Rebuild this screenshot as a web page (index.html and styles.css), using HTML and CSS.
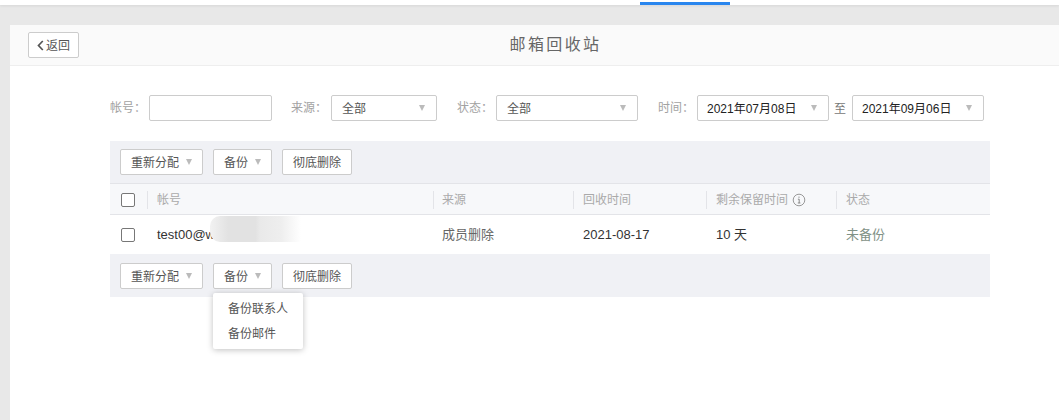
FILE: index.html
```html
<!DOCTYPE html>
<html lang="zh">
<head>
<meta charset="utf-8">
<title>邮箱回收站</title>
<link rel="stylesheet" href="styles.css">
</head>
<body>
<div class="topbar"><div class="topbar-active"></div></div>
<main class="card">
  <header class="head">
    <button class="btn back">
      <svg class="back-icon" width="7" height="11" viewBox="0 0 7 11"><path d="M5.8 1 1.5 5.5l4.3 4.5" fill="none" stroke="#555" stroke-width="1.7"/></svg>返回
    </button>
    <h1 class="title">邮箱回收站</h1>
  </header>
  <section class="filters">
    <span class="label">帐号：</span>
    <input class="field f-account" type="text">
    <span class="label l-source">来源：</span>
    <div class="field select f-source"><span>全部</span><i class="caret"></i></div>
    <span class="label l-state">状态：</span>
    <div class="field select f-state"><span>全部</span><i class="caret"></i></div>
    <span class="label l-time">时间：</span>
    <div class="field select f-date"><span class="date">2021年07月08日</span><i class="caret"></i></div>
    <span class="to">至</span>
    <div class="field select f-date"><span class="date">2021年09月06日</span><i class="caret"></i></div>
  </section>
  <section class="list">
    <div class="toolbar">
      <button class="btn b-assign">重新分配<i class="caret"></i></button>
      <button class="btn b-backup">备份<i class="caret"></i></button>
      <button class="btn b-del">彻底删除</button>
    </div>
    <div class="row thead">
      <div class="cell c-check"><span class="check"></span></div>
      <div class="cell c-account">帐号</div>
      <div class="cell c-src">来源</div>
      <div class="cell c-time">回收时间</div>
      <div class="cell c-left">剩余保留时间
        <svg class="info" width="14" height="14" viewBox="0 0 14 14"><circle cx="7" cy="7" r="5.8" fill="none" stroke="#999" stroke-width="1"/><path d="M7 3.6v1.2M5.9 6.2H7.2V10M5.8 10h2.6" fill="none" stroke="#888" stroke-width="1"/></svg>
      </div>
      <div class="cell c-state">状态</div>
    </div>
    <div class="row tbody">
      <div class="cell c-check"><span class="check"></span></div>
      <div class="cell c-account dark">test00@w<span class="smudge"></span></div>
      <div class="cell c-src mid">成员删除</div>
      <div class="cell c-time dark">2021-08-17</div>
      <div class="cell c-left dark">10 天</div>
      <div class="cell c-state green">未备份</div>
    </div>
    <div class="toolbar bottom">
      <button class="btn b-assign">重新分配<i class="caret"></i></button>
      <div class="drop-wrap">
        <button class="btn b-backup">备份<i class="caret"></i></button>
        <ul class="menu">
          <li>备份联系人</li>
          <li>备份邮件</li>
        </ul>
      </div>
      <button class="btn b-del">彻底删除</button>
    </div>
  </section>
</main>
</body>
</html>
```
FILE: styles.css
```css
* { box-sizing: border-box; }
html, body { margin: 0; height: 420px; overflow: hidden; }
body {
  background: #e8e8e8;
  font-family: "Liberation Sans", "Noto Sans CJK SC", sans-serif;
  font-size: 12px;
  color: #555;
}
.topbar {
  height: 5px;
  background: #fff;
  padding: 2px 0 0 640px;
  box-shadow: 0 1px 3px rgba(0,0,0,.08);
}
.topbar-active { width: 90px; height: 3px; background: #2a86ee; }
.card {
  margin: 20px 0 0 10px;
  height: 395px;
  background: #fff;
  border-top-left-radius: 3px;
}
.head {
  height: 41px;
  background: #fafafa;
  border-bottom: 1px solid #eee;
  position: relative;
  padding: 7px 0 0 18px;
}
.title {
  margin: 0;
  position: absolute;
  left: 0; right: 0; top: 10px;
  padding-left: 42px;
  text-align: center;
  font-size: 16px;
  letter-spacing: 2.4px;
  line-height: 20px;
  font-weight: 400;
  color: #666;
}
.btn {
  display: inline-flex;
  align-items: center;
  height: 26px;
  padding: 0 10px 2px;
  background: #fff;
  border: 1px solid #ccc;
  border-radius: 2px;
  font: inherit;
  color: #555;
  white-space: nowrap;
}
.back { width: 51px; padding: 0 0 2px 8px; position: relative; z-index: 1; }
.back-icon { margin-right: 2px; margin-top: 2px; }
.filters {
  display: flex;
  align-items: center;
  height: 26px;
  margin: 29px 0 0 100px;
}
.label { color: #a2a2a2; width: 39px; white-space: nowrap; padding-bottom: 3px; }
.l-source { margin-left: 19px; width: 40px; }
.l-state { margin-left: 20px; width: 39px; }
.l-time { margin-left: 20px; width: 39px; }
.field {
  height: 26px;
  background: #fff;
  border: 1px solid #ccc;
  border-radius: 2px;
  padding: 0 10px;
  color: #555;
}
.select { display: flex; align-items: center; justify-content: space-between; }
.select span { padding-bottom: 2px; }
.f-account { width: 123px; }
.f-source { width: 106px; }
.f-state { width: 142px; }
.f-date { width: 132px; padding-left: 9px; }
.date { color: #222; }
.to { width: 23px; padding: 0 0 2px 5px; color: #777; }
.caret {
  width: 0; height: 0;
  border-left: 3.5px solid transparent;
  border-right: 3.5px solid transparent;
  border-top: 6px solid #bbb;
  margin-right: 1px;
}
.btn .caret { margin-left: 7px; margin-right: 0; margin-top: 2px; }
.b-assign { width: 83px; }
.b-backup { width: 59px; }
.b-del { width: 70px; }
.list { width: 880px; margin: 20px 0 0 100px; }
.toolbar {
  height: 43px;
  background: #f0f1f5;
  border-bottom: 1px solid #e3e4e8;
  padding: 8px 10px 0;
  display: flex;
  align-items: flex-start;
  gap: 10px;
}
.toolbar.bottom { border-bottom: 0; padding-top: 9px; }
.row { display: flex; align-items: center; }
.thead {
  height: 31px;
  padding-top: 1px;
  background: #f7f8fa;
  border-bottom: 1px solid #e3e4e8;
  color: #aaa;
}
.tbody { height: 39px; background: #fff; font-size: 13px; }
.cell { height: 18px; line-height: 18px; padding-left: 9px; white-space: nowrap; position: relative; display: flex; align-items: center; }
.thead .cell { border-left: 1px solid #e3e4e8; }
.tbody .cell { border-left: 1px solid transparent; }
.thead .c-check { border-left: 0; }
.tbody .c-check { border-left: 0; }
.c-check { width: 37px; padding-left: 11px; }
.c-account { width: 286px; }
.c-src { width: 140px; padding-left: 8px; }
.c-time { width: 133px; }
.c-left { width: 130px; }
.c-state { flex: 1; }
.check {
  display: block;
  width: 14px; height: 14px;
  background: #fff;
  border: 1px solid #777;
  border-radius: 2px;
}
.info { margin-left: 4px; }
.dark { color: #333; }
.mid { color: #666; }
.green { color: #7f9186; }
.smudge {
  position: absolute;
  left: 62px;
  top: -10px;
  width: 91px;
  height: 26px;
  background: linear-gradient(90deg, #f2f2f2 0, #e2e2e2 20%, #e2e2e2 50%, #e9e9e9 55%, #eeeeee 78%, #fff 100%);
  border-radius: 10px 0 0 10px;
}
.drop-wrap { position: relative; height: 26px; }
.menu {
  position: absolute;
  left: 0; top: 30px;
  width: 90px;
  height: 56px;
  margin: 0;
  padding: 4px 0;
  list-style: none;
  background: #fff;
  border-radius: 2px;
  box-shadow: 0 1px 6px rgba(0,0,0,.25);
  z-index: 5;
}
.menu li { height: 25px; line-height: 25px; padding-left: 15px; color: #555; }
```
